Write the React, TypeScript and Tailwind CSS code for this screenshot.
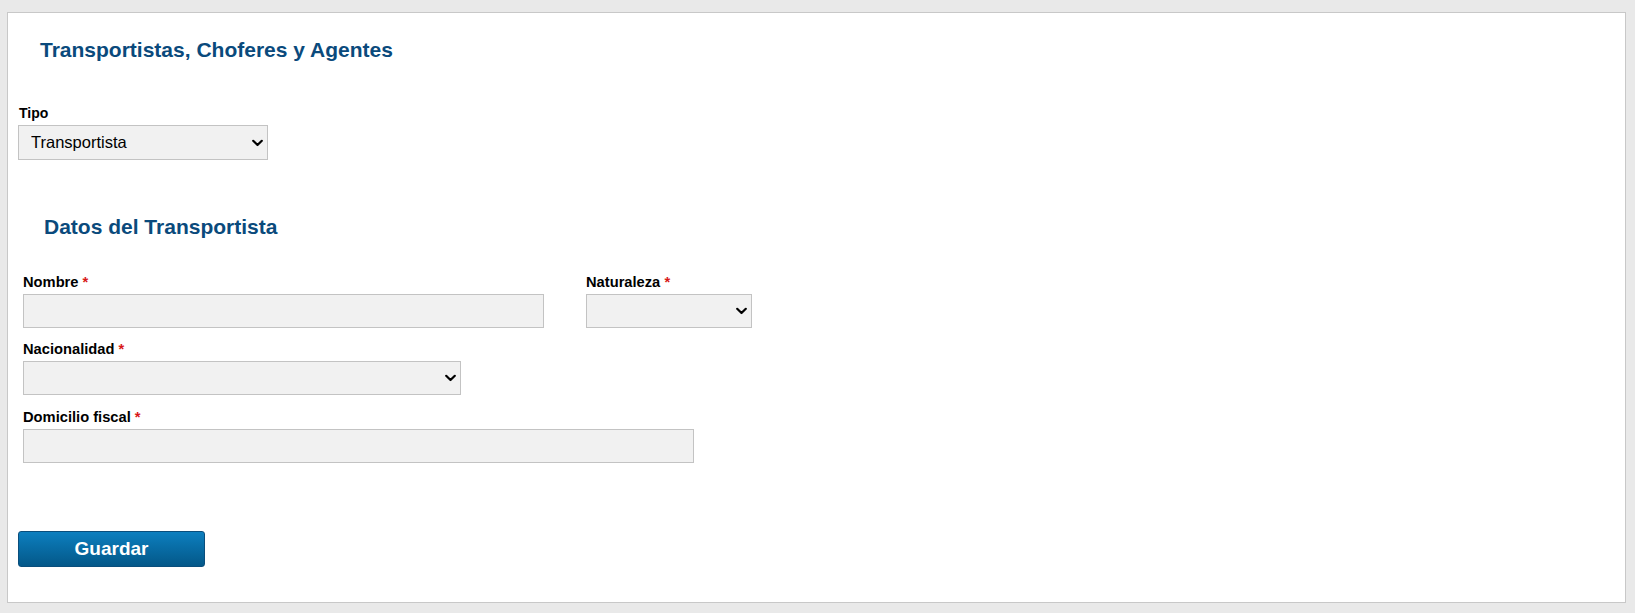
import React from "react";

const font = { fontFamily: '"Liberation Sans", Arial, sans-serif' };

function Chevron() {
  return (
    <svg
      className="pointer-events-none absolute right-[5px] top-1/2 -translate-y-1/2"
      width="11"
      height="7"
      viewBox="0 0 11 7"
      fill="none"
    >
      <polyline points="1.2,1.2 5.5,5.5 9.8,1.2" stroke="#000" strokeWidth="2.2" strokeLinecap="round" strokeLinejoin="round" />
    </svg>
  );
}

function Label({ text, required }: { text: string; required?: boolean }) {
  return (
    <div className="text-[14.7px] leading-[17px] font-bold text-black">
      {text}
      {required && <span className="text-[#d81818]"> *</span>}
    </div>
  );
}

function Select({ w, value }: { w: string; value?: string }) {
  return (
    <div className={`relative mt-[3px] h-[34px] ${w}`}>
      <select
        className="h-full w-full appearance-none border border-[#c3c3c3] bg-[#f1f1f1] pl-[12px] text-[16.5px] text-black outline-none"
        defaultValue={value ?? ""}
      >
        <option value="">{""}</option>
        {value && <option value={value}>{value}</option>}
      </select>
      <Chevron />
    </div>
  );
}

function Input({ w }: { w: string }) {
  return (
    <input
      type="text"
      className={`mt-[3px] block h-[34px] border border-[#c3c3c3] bg-[#f1f1f1] outline-none ${w}`}
    />
  );
}

export default function App() {
  return (
    <div className="min-h-[613px] bg-[#e9e9e9] pb-[10px] pl-[7px] pr-[9px] pt-[12px]" style={font}>
      <div className="flex h-[591px] flex-col items-start border border-[#c8c8c8] bg-white">
        <h1 className="ml-[32px] mt-[25px] text-[21px] font-bold leading-[24px] text-[#0a4a7c]">
          Transportistas, Choferes y Agentes
        </h1>

        <div className="ml-[11px] mt-[43px] text-[14px] font-bold leading-[16px] text-black">Tipo</div>
        <div className="relative ml-[10px] mt-[4px] h-[35px] w-[250px]">
          <select
            className="h-full w-full appearance-none border border-[#c3c3c3] bg-[#f1f1f1] pl-[12px] text-[16.5px] text-black outline-none"
            defaultValue="Transportista"
          >
            <option value="Transportista">Transportista</option>
            <option value="Chofer">Chofer</option>
            <option value="Agente">Agente</option>
          </select>
          <Chevron />
        </div>

        <h2 className="ml-[36px] mt-[55px] text-[21px] font-bold leading-[24px] text-[#0a4a7c]">
          Datos del Transportista
        </h2>

        <div className="ml-[15px] mt-[35px] flex">
          <div className="w-[521px]">
            <Label text="Nombre" required />
            <Input w="w-[521px]" />
          </div>
          <div className="ml-[42px] w-[166px]">
            <Label text="Naturaleza" required />
            <Select w="w-[166px]" />
          </div>
        </div>

        <div className="ml-[15px] mt-[13px]">
          <Label text="Nacionalidad" required />
          <Select w="w-[438px]" />
        </div>

        <div className="ml-[15px] mt-[14px]">
          <Label text="Domicilio fiscal" required />
          <Input w="w-[671px]" />
        </div>

        <button
          type="button"
          className="ml-[10px] mt-[68px] h-[36px] w-[187px] rounded-[3px] border border-[#0a4e7c] bg-linear-to-b from-[#0d7fbf] to-[#045889] text-[19px] font-bold text-white"
        >
          Guardar
        </button>
      </div>
    </div>
  );
}
